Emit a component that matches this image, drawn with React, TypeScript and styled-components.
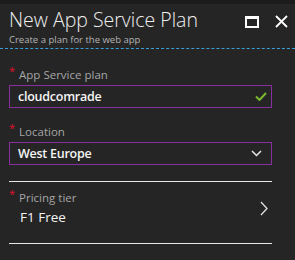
import React, { FC } from 'react';
import styled, { createGlobalStyle } from 'styled-components';

const GlobalStyle = createGlobalStyle`
    html, body {
        margin: 0;
        padding: 0;
        background: #252525;
    }
    * {
        box-sizing: border-box;
    }
`;

const Blade = styled.div`
    width: 295px;
    height: 260px;
    background: #252525;
    border-top: 4px solid #1c1c1c;
    font-family: 'Open Sans', 'Noto Sans', sans-serif;
    color: #fff;
    overflow: hidden;
`;

const Header = styled.div`
    display: flex;
    align-items: flex-start;
    justify-content: space-between;
    padding: 4px 7px 0 9px;
    height: 45px;
    border-bottom: 1px dashed #3a9fd6;
`;

const Titles = styled.div`
    display: flex;
    flex-direction: column;
`;

const Title = styled.h1`
    margin: 0;
    font-size: 19.5px;
    font-weight: 300;
    line-height: 24px;
    color: #f0f0f0;
`;

const Subtitle = styled.div`
    font-size: 9.5px;
    line-height: 14px;
    color: #b4b4b4;
    margin-top: 1px;
`;

const Actions = styled.div`
    display: flex;
    align-items: center;
    gap: 16px;
    margin-top: 7px;
`;

const Body = styled.div`
    display: flex;
    flex-direction: column;
    padding: 18px 0 0 9px;
    width: 272px;
`;

const Field = styled.div<{ $gap?: number }>`
    display: flex;
    flex-direction: column;
    margin-bottom: ${({ $gap }) => $gap ?? 0}px;
`;

const Label = styled.div`
    display: flex;
    align-items: flex-start;
    font-size: 11.5px;
    line-height: 16px;
    color: #a6a6a6;
    margin-bottom: 2px;
`;

const Star = styled.span`
    color: #e0102e;
    font-size: 11px;
    line-height: 10px;
    margin-right: 4px;
    margin-top: -1px;
`;

const Box = styled.div<{ $padRight: number }>`
    display: flex;
    align-items: center;
    justify-content: space-between;
    height: 23px;
    border: 1px solid #8a2d9e;
    padding: 0 ${({ $padRight }) => $padRight}px 0 8px;
    font-size: 12.5px;
    font-weight: 600;
    letter-spacing: -0.25px;
    color: #f4f4f4;
`;

const Rule = styled.div<{ $top: number }>`
    height: 1px;
    margin-top: ${({ $top }) => $top}px;
    background: #e8e8e8;
`;

const Picker = styled.div`
    display: flex;
    align-items: center;
    justify-content: space-between;
    padding-right: 4px;
`;

const PickerText = styled.div`
    display: flex;
    flex-direction: column;
`;

const PickerValue = styled.div`
    font-size: 13.5px;
    line-height: 18px;
    padding-left: 11px;
    color: #f4f4f4;
`;

const App: FC = () => {
    return (
        <>
            <GlobalStyle />
            <Blade>
                <Header>
                    <Titles>
                        <Title>New App Service Plan</Title>
                        <Subtitle>Create a plan for the web app</Subtitle>
                    </Titles>
                    <Actions>
                        <svg width="14" height="12" viewBox="0 0 14 12">
                            <rect x="1" y="1" width="12" height="10" fill="none" stroke="#fff" strokeWidth="2" />
                            <rect x="1" y="1" width="12" height="2" fill="#fff" />
                        </svg>
                        <svg width="13" height="13" viewBox="0 0 13 13">
                            <path d="M1 1 L12 12 M12 1 L1 12" stroke="#fff" strokeWidth="1.8" />
                        </svg>
                    </Actions>
                </Header>
                <Body>
                    <Field $gap={16}>
                        <Label>
                            <Star>*</Star>App Service plan
                        </Label>
                        <Box $padRight={4}>
                            cloudcomrade
                            <svg width="12" height="9" viewBox="0 0 12 9">
                                <path d="M1 4.5 L4.5 8 L11 1" fill="none" stroke="#7cb82f" strokeWidth="2" />
                            </svg>
                        </Box>
                    </Field>
                    <Field $gap={8}>
                        <Label>
                            <Star>*</Star>Location
                        </Label>
                        <Box $padRight={9}>
                            West Europe
                            <svg width="11" height="7" viewBox="0 0 11 7">
                                <path d="M1 1 L5.5 5.5 L10 1" fill="none" stroke="#e8e8e8" strokeWidth="1.5" />
                            </svg>
                        </Box>
                        <Rule $top={16} />
                    </Field>
                    <Field>
                        <Picker>
                            <PickerText>
                                <Label>
                                    <Star>*</Star>Pricing tier
                                </Label>
                                <PickerValue>F1 Free</PickerValue>
                            </PickerText>
                            <svg width="8" height="15" viewBox="0 0 8 15">
                                <path d="M1 1 L7 7.5 L1 14" fill="none" stroke="#e0e0e0" strokeWidth="1.3" />
                            </svg>
                        </Picker>
                        <Rule $top={17} />
                    </Field>
                </Body>
            </Blade>
        </>
    );
};

export default App;
